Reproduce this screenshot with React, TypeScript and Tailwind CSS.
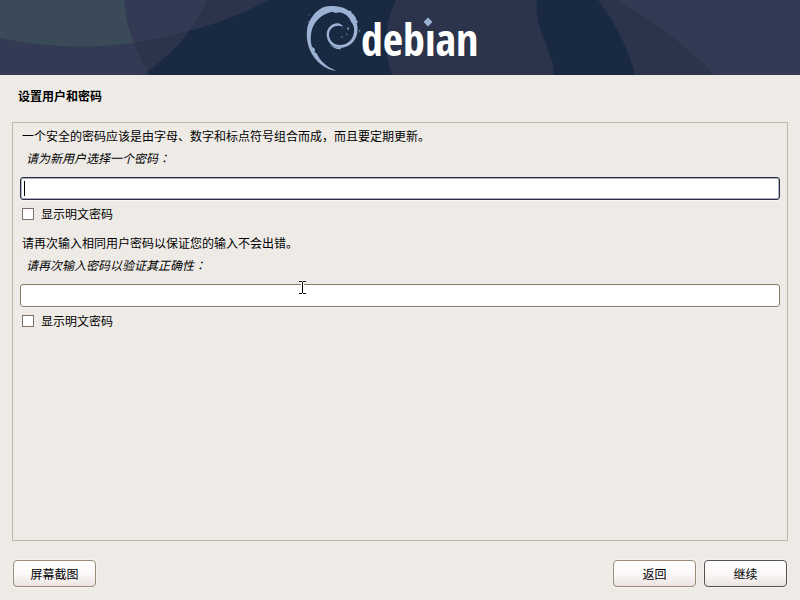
import { useState } from 'react'
import clsx from 'clsx'

function Banner() {
  return (
    <svg
      viewBox="0 0 800 75"
      preserveAspectRatio="xMidYMid slice"
      className="block w-full"
      role="img"
      aria-label="debian"
    >
      <rect width="800" height="75" fill="#1a2942" />

      {/* left circles */}
      <path d="M0 0H268Q232 20 189 31Q172 54 148 71L150 75H0Z" fill="#2b344b" />
      <path d="M0 0H207Q200 16 189 31Q162 39 134 43Q139 57 148 71L142 75H0Z" fill="#323b53" />
      <path d="M189 31Q162 39 134 43Q139 57 148 71Q172 54 189 31Z" fill="#2b344b" />
      <path d="M0 0H124Q126 25 134 43Q66 52 0 38Z" fill="#3b4a58" />

      {/* middle and right circles */}
      <path d="M396 0C386 19 382 47 392 75H554C553 47 534 33 537 0Z" fill="#2b344b" />
      <path d="M598 0Q626 38 635 75H800V0Z" fill="#2b344b" />
      <path d="M616 0Q672 30 714 75H800V0Z" fill="#323b53" />

      {/* swirl */}
      <g transform="translate(302 2) scale(0.3333)" fill="#9bb2d4">
        <path d="M103 206C72 206 38 178 24 145C10 110 11 72 28 48C42 26 62 12 86 12C106 12 126 15 140 26L148 27L148 32C157 38 163 46 163 54L169 60L164 63C168 75 168 92 163 103C156 124 136 138 113 138C92 137 74 119 74 98C74 79 88 65 106 64C114 64 120 68 124 74C104 66 82 76 81 97C81 116 95 129 114 129C135 128 149 117 154 99C159 84 156 70 148 61C143 46 131 34 112 31L100 33L91 29C68 33 48 48 36 68C25 88 24 115 30 134L39 141L38 151L44 154C55 178 76 197 103 206Z" />
        <path d="M84 126Q96 138 117 138L116 142Q94 142 84 126Z" />
        <path d="M119 76l5 4-4-1zM133 94l4 3-3 3zM136 77l4-1 1 6-4 2zM117 105l7-2-4 4zM171 84l4 1-2 5zM16 64l2-7 2 1zM19 38l3-2-1 5z" />
      </g>

      {/* wordmark, the dot of the i is a diamond */}
      <text
        x="361"
        y="56"
        fill="#ffffff"
        className="font-['Liberation_Sans_Narrow','Open_Sans_Condensed','Lato',sans-serif] text-[44px] font-bold"
      >
        debian
      </text>
      <rect x="423" y="17" width="12" height="12" fill="#2b344b" />
      <path d="M428 17.500L432.500 22L428 26.500L423.500 22Z" fill="#9bb2d4" />
    </svg>
  )
}

type PasswordFieldProps = {
  id: string
  description: string
  label: string
  active: boolean
  onFocus: () => void
}

function PasswordField({ id, description, label, active, onFocus }: PasswordFieldProps) {
  const [value, setValue] = useState('')
  const [visible, setVisible] = useState(false)

  return (
    <div className="flex flex-col">
      <p className="px-0.5 leading-[22px]">{description}</p>
      <label htmlFor={id} className="px-1.5 italic leading-[22px]">
        {label}
        <span className="font-['Noto_Sans_CJK_JP',sans-serif]">：</span>
      </label>
      <div className="relative mt-2">
        <input
          id={id}
          type={visible ? 'text' : 'password'}
          value={value}
          onChange={(e) => setValue(e.target.value)}
          onFocus={onFocus}
          className={clsx(
            'block h-[23px] w-full rounded-[3px] border bg-white px-1 outline-none',
            active
              ? 'border-[#2d2a3f] shadow-[inset_0_0_0_1px_#a9b4c8,0_1px_0_#faf8f6]'
              : 'border-[#87796a] shadow-[0_1px_0_#faf8f6]',
            value === '' && 'caret-transparent',
          )}
        />
        {active && value === '' && (
          <span className="pointer-events-none absolute left-1 top-1 h-[15px] w-px bg-black" />
        )}
      </div>
      <label className="mt-1 flex items-center gap-[7px] px-0.5 leading-5">
        <input
          type="checkbox"
          checked={visible}
          onChange={(e) => setVisible(e.target.checked)}
          className="size-3 appearance-none border border-[#806f68] bg-white checked:bg-[#2d2a3f]"
        />
        显示明文密码
      </label>
    </div>
  )
}

function Button({ children, primary = false }: { children: string; primary?: boolean }) {
  return (
    <button
      type="button"
      className={clsx(
        'h-[27px] w-[83px] rounded-[4px] border bg-linear-to-b from-white via-[#fbf8f8] to-[#ebe4e1] shadow-[0_0_0_1px_#f5f2ef]',
        primary ? 'border-[#5c504c]' : 'border-[#9a8a79]',
      )}
    >
      {children}
    </button>
  )
}

function TextCursor() {
  return (
    <svg viewBox="0 0 9 15" className="pointer-events-none absolute left-[298px] top-[280px] h-[15px] w-[9px]">
      <path d="M1 1.500H4M5 1.500H8M4.500 2V13M1 13.500H4M5 13.500H8" stroke="#fff" strokeWidth="3" />
      <path d="M1 1.500H4M5 1.500H8M4.500 2V13M1 13.500H4M5 13.500H8" stroke="#000" />
    </svg>
  )
}

export default function App() {
  const [active, setActive] = useState('password')

  return (
    <div className="relative flex min-h-screen flex-col bg-[#eeebe7] font-['Noto_Sans_CJK_SC',sans-serif] text-xs text-black">
      <header>
        <Banner />
      </header>
      <form className="flex flex-1 flex-col px-3 pb-[13px]" onSubmit={(e) => e.preventDefault()}>
        <h1 className="px-1.5 pb-4 pt-[11px] font-bold leading-5">设置用户和密码</h1>
        <main className="flex flex-1 flex-col gap-2 border border-[#c3b5a5] px-[7px] py-0.5">
          <PasswordField
            id="password"
            description="一个安全的密码应该是由字母、数字和标点符号组合而成，而且要定期更新。"
            label="请为新用户选择一个密码"
            active={active === 'password'}
            onFocus={() => setActive('password')}
          />
          <PasswordField
            id="password-again"
            description="请再次输入相同用户密码以保证您的输入不会出错。"
            label="请再次输入密码以验证其正确性"
            active={active === 'password-again'}
            onFocus={() => setActive('password-again')}
          />
        </main>
        <footer className="flex gap-2 px-px pt-[19px]">
          <Button>屏幕截图</Button>
          <div className="flex-1" />
          <Button>返回</Button>
          <Button primary>继续</Button>
        </footer>
      </form>
      <TextCursor />
    </div>
  )
}
